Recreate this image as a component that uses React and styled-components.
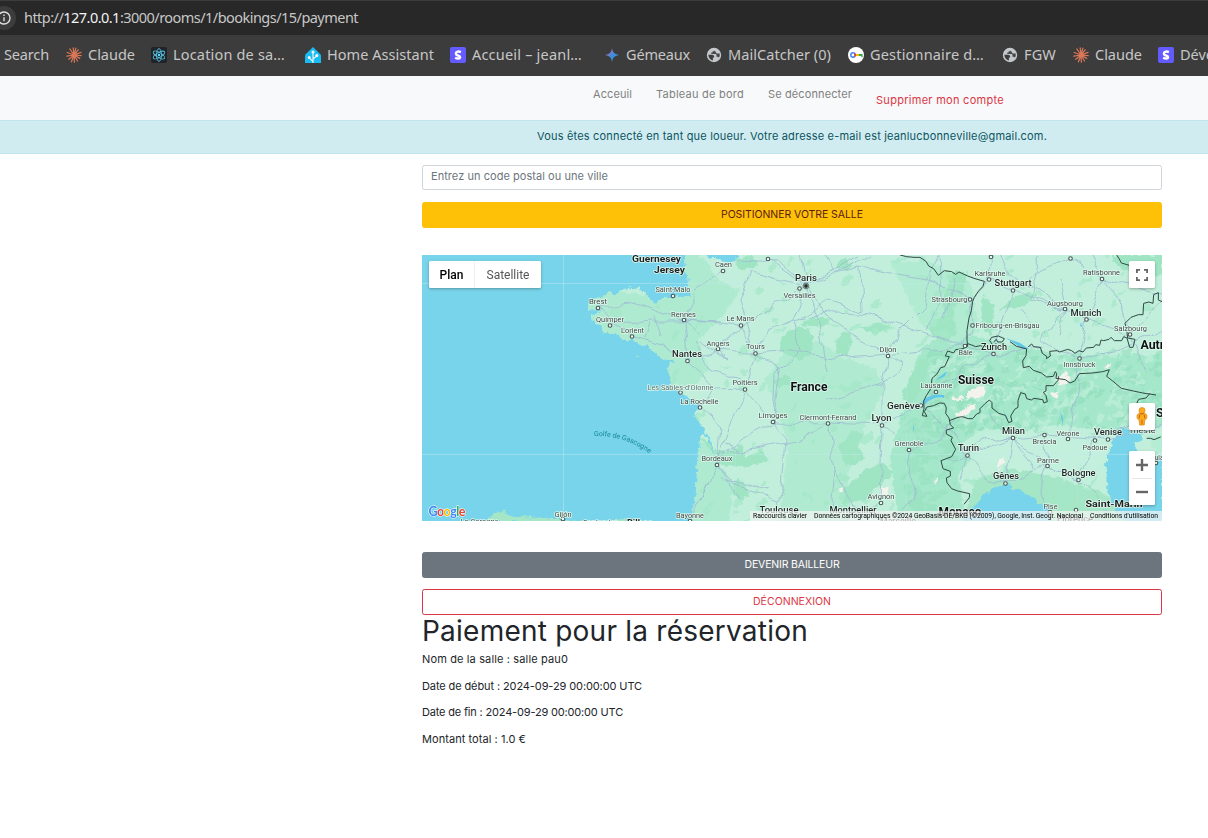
import React, { useLayoutEffect, useRef, useState } from 'react';
import styled, { createGlobalStyle, css } from 'styled-components';

const Global = createGlobalStyle`
  * { box-sizing: border-box; }
  body { margin: 0; background: #fff; overflow: hidden; }
  #root { width: 1208px; height: 838px; }
`;

const Page = styled.div`
  display: flex;
  flex-direction: column;
  height: 838px;
  overflow: hidden;
  font-family: Inter, 'Liberation Sans', sans-serif;
  font-size: 11px;
  color: #212529;
`;

const FitSpan = styled.span`
  display: inline-block;
  white-space: pre;
`;

/* Spreads the letters so that the text takes the given width. */
function Fit({ width, children }) {
  const ref = useRef(null);
  const [spacing, setSpacing] = useState(0);
  useLayoutEffect(() => {
    const el = ref.current;
    setSpacing((width - el.getBoundingClientRect().width) / el.textContent.length);
  }, [width]);
  return <FitSpan ref={ref} style={{ letterSpacing: spacing }}>{children}</FitSpan>;
}

const AddressBar = styled.div`
  display: flex;
  align-items: center;
  flex: none;
  height: 35px;
  border-top: 1px solid #3c3c3c;
  background: #282828;
  color: #c7c7c7;
  font: 14.5px/20px 'Noto Sans', sans-serif;
  > span { margin-bottom: 2px; }
`;
const InfoBadge = styled.div`
  display: flex;
  align-items: center;
  justify-content: center;
  width: 24px;
  height: 24px;
  margin-left: -8px;
  margin-right: 8px;
  border-radius: 50%;
  background: #3c3c3c;
`;
const Host = styled.span`
  color: #f2f2f2;
`;
const Bookmarks = styled.div`
  display: flex;
  align-items: center;
  flex: none;
  height: 41px;
  padding-bottom: 1px;
  background: #3c3c3c;
  color: #c7c7c7;
  font: 14.5px/20px 'Noto Sans', sans-serif;
`;
const Bookmark = styled.div`
  display: flex;
  align-items: center;
  flex: none;
  gap: 6px;
  width: ${p => p.$w}px;
  padding-left: ${p => p.$pad || 0}px;
  white-space: nowrap;
  svg { flex: none; }
  span { margin-bottom: 2px; }
`;

const Navbar = styled.nav`
  display: flex;
  align-items: flex-start;
  flex: none;
  gap: 24px;
  height: 44px;
  padding: 10px 0 0 593px;
  background: #f8f9fa;
`;
const NavLink = styled.a`
  line-height: 16px;
  color: ${p => (p.$danger ? '#dc3545' : '#7f7f80')};
  margin-top: ${p => (p.$danger ? 6 : 0)}px;
`;
const Alert = styled.div`
  flex: none;
  height: 34px;
  padding: 7px 0 0 537px;
  border: solid #bee5eb;
  border-width: 1px 0;
  background: #d1ecf1;
  color: #0c5460;
  line-height: 16px;
`;
const Content = styled.main`
  display: flex;
  flex-direction: column;
  width: 740px;
  margin: 11px 0 0 422px;
`;
const Field = styled.div`
  height: 25px;
  padding: 2px 8px;
  border: 1px solid #ced4da;
  border-radius: 2.5px;
  color: #6c757d;
  line-height: 16px;
`;
const tones = {
  warning: css`background: #ffc107; color: #5b1a12; border-color: #ffc107;`,
  secondary: css`background: #6c757d; color: #fff; border-color: #6c757d;`,
  outline: css`background: #fff; color: #dc3545; border-color: #dc3545;`,
};
const Button = styled.button`
  display: block;
  height: 26px;
  margin: ${p => p.$top}px 0 0;
  padding: 0 0 1px;
  border: 1px solid;
  border-radius: 2.5px;
  font: 10.5px/16px Inter, sans-serif;
  ${p => tones[p.$tone]}
`;
const Title = styled.h1`
  margin: 0 0 4px;
  font-size: 28px;
  font-weight: 400;
  line-height: 32px;
`;
const Detail = styled.p`
  margin: 0 0 10.6px;
  line-height: 16px;
`;

const MapBox = styled.section`
  position: relative;
  height: 266px;
  margin: 27px 0 31px;
  overflow: hidden;
  background: #78d4ea;
  > svg { display: block; }
`;
const MapControl = styled.div`
  position: absolute;
  top: ${p => p.$top}px;
  left: ${p => p.$left}px;
  display: flex;
  flex-direction: ${p => (p.$column ? 'column' : 'row')};
  align-items: center;
  justify-content: center;
  width: ${p => p.$w || 26}px;
  height: ${p => p.$h || 27}px;
  border-radius: 1.5px;
  background: #fff;
  box-shadow: 0 1px 3px rgba(0, 0, 0, 0.3);
`;
const MapType = styled.div`
  display: flex;
  align-items: center;
  justify-content: center;
  width: ${p => p.$w}px;
  height: 100%;
  border-left: ${p => (p.$active ? 0 : 1)}px solid #eee;
  font: ${p => (p.$active ? 500 : 400)} 12px Roboto, sans-serif;
  color: ${p => (p.$active ? '#000' : '#565656')};
`;
const ZoomHalf = styled.div`
  display: flex;
  align-items: center;
  justify-content: center;
  width: 20px;
  height: 27px;
  & + & { border-top: 1px solid #e6e6e6; }
`;
const Attribution = styled.div`
  position: absolute;
  right: 0;
  bottom: 0;
  display: flex;
  gap: 7px;
  height: 10px;
  padding: 0 4px 0 3px;
  background: rgba(245, 245, 245, 0.7);
  color: #000;
  font: 6.8px/10px Roboto, sans-serif;
`;

const Claude = () => (
  <svg width="16" height="16" viewBox="0 0 16 16" stroke="#d97757" strokeWidth="1.25" strokeLinecap="round">
    <path d="M8 8 7.2.8M8 8l1.9-6.8M8 8l4.2-5.2M8 8l7-2.7M8 8l7.2.6M8 8l5.7 3.4M8 8l3.5 6M8 8l.4 7.2M8 8l-2.6 6.8M8 8l-5.2 4.3M8 8 .8 9.1M8 8 1.2 5.5M8 8 3.8 1.9" />
  </svg>
);
const ReactLogo = () => (
  <svg width="16" height="16" viewBox="0 0 16 16">
    <rect width="16" height="16" rx="2" fill="#20232a" />
    <g fill="none" stroke="#53c1de" strokeWidth=".9">
      {[30, 90, 150].map(a => <ellipse key={a} cx="8" cy="8" rx="6.4" ry="2.5" transform={`rotate(${a} 8 8)`} />)}
    </g>
    <circle cx="8" cy="8" r="1.2" fill="#61dafb" />
  </svg>
);
const HomeLogo = () => (
  <svg width="16" height="16" viewBox="0 0 16 16">
    <path d="M8 0l7.6 7.5q.4.5.4 1.2V16H0V8.7q0-.7.4-1.2z" fill="#18bcf2" />
    <g stroke="#f2f4f9" strokeWidth="1.1" fill="#f2f4f9">
      <path d="M8 16V5M8 14.5 4.2 10.8M8 12l3.7-3.2" />
      <circle cx="8" cy="5" r="1" /><circle cx="4.2" cy="10.5" r="1" /><circle cx="11.8" cy="8.6" r="1" />
    </g>
  </svg>
);
const Stripe = () => (
  <svg width="16" height="16" viewBox="0 0 16 16">
    <rect width="16" height="16" rx="2" fill="#635bff" />
    <path d="M10.9 4.3C8.7 3.3 5.9 3.6 5.9 5.7c0 2.6 4.2 1.8 4.2 3.7 0 1.8-2.8 1.6-5 .5" fill="none" stroke="#fff" strokeWidth="2.4" transform="translate(0 .8)" />
  </svg>
);
const Gemini = () => (
  <svg width="16" height="16" viewBox="0 0 16 16">
    <defs><linearGradient id="gem" x1="0" y1="0" x2="1" y2="1"><stop offset=".2" stopColor="#9a72c2" /><stop offset=".6" stopColor="#318fdd" /><stop offset="1" stopColor="#51b9dc" /></linearGradient></defs>
    <path d="M8 1.3Q8.7 7.3 15 8 8.7 8.7 8 14.7 7.3 8.7 1 8 7.3 7.3 8 1.3z" fill="url(#gem)" />
  </svg>
);
const Globe = () => (
  <svg width="16" height="16" viewBox="0 0 16 16">
    <circle cx="8" cy="8" r="7.2" fill="#c4c7cc" />
    <path d="M2.3 7.8h3.9q1.9.1 2 2v.8H6.9v2.9Q2.8 12.4 2.3 7.8z" fill="#3c3c3c" />
    <path d="M9 2.4v.8q-.1 1-1.2 1.1H6.6v1.3H5.3v1.4h4.1q1 .1 1.1 1.1v1.6h1q1 0 1.3 1 1.4-1.7.9-4.2H11q-1-.1-1-1.1V4.8h-.9z" fill="#3c3c3c" opacity=".92" />
  </svg>
);
const KeyLogo = () => (
  <svg width="16" height="16" viewBox="0 0 16 16">
    <circle cx="8" cy="8" r="8" fill="#fff" />
    <path d="M7.4 7h5v2h-5z" fill="#fbbc04" />
    <path d="M11 7h3.6v3.2h-1.3V9H11z" fill="#34a853" />
    <circle cx="5" cy="8" r="2.2" fill="none" stroke="#4285f4" strokeWidth="1.5" />
    <path d="M6.2 6.3Q7.2 6.9 7.2 8T6.2 9.7" fill="none" stroke="#ea4335" strokeWidth="1.5" />
  </svg>
);

const bookmarks = [
  { text: 'Search', tw: 45, w: 66, pad: 4 },
  { icon: Claude, text: 'Claude', tw: 47, w: 85 },
  { icon: ReactLogo, text: 'Location de sa…', tw: 112, w: 154 },
  { icon: HomeLogo, text: 'Home Assistant', tw: 107, w: 145 },
  { icon: Stripe, text: 'Accueil – jeanl…', tw: 110, w: 154 },
  { icon: Gemini, text: 'Gémeaux', tw: 64, w: 102 },
  { icon: Globe, text: 'MailCatcher (0)', tw: 103, w: 142 },
  { icon: KeyLogo, text: 'Gestionnaire d…', tw: 114, w: 154 },
  { icon: Globe, text: 'FGW', tw: 32, w: 71 },
  { icon: Claude, text: 'Claude', tw: 47, w: 85 },
  { icon: Stripe, text: 'Développeurs', tw: 94, w: 120 },
];

/* [name, centre x, centre y, width, size class] */
const labels = [
  ['Guernesey', 656.5, 259, 49, 'm'], ['Jersey', 669.5, 269.7, 31, 'm'],
  ['Caen', 723.5, 264.6, 17], ['Saint-Malo', 673, 289.2, 35], ['Brest', 598, 301.2, 18],
  ['Quimper', 610, 319.4, 28], ['Lorient', 632.5, 330.8, 23], ['Rennes', 683.5, 314, 25],
  ['Le Mans', 740.5, 318.8, 28], ['Angers', 718, 343.6, 23], ['Tours', 755.5, 346.8, 19],
  ['Nantes', 687, 353.8, 30, 'c'], ["Les Sables-d'Olonne", 680.5, 387, 66, 's'],
  ['Poitiers', 745, 382.8, 25], ['La Rochelle', 699.5, 401.4, 38], ['Limoges', 773, 415.6, 29],
  ['Bordeaux', 717, 458.4, 31], ['Gijón', 563, 514, 17], ['La Corogne', 479.5, 521, 38],
  ['Santander', 600, 522, 34], ['Bilbao', 640, 523, 26, 'm'],
  ['Bayonne', 690, 515.4, 28], ['Toulouse', 779, 510, 39, 'c'], ['Paris', 806, 278.2, 22, 'c'],
  ['Versailles', 799.5, 295.4, 32], ['Dijon', 888, 349.4, 17], ['France', 809, 387.2, 37, 'l'],
  ['Clermont-Ferrand', 828, 417.6, 57], ['Lyon', 881.5, 418, 20, 'c'], ['Genève', 903.5, 406, 33, 'c'],
  ['Lausanne', 936.5, 385.6, 32], ['Grenoble', 909, 443.6, 29], ['Avignon', 881, 496.4, 27],
  ['Montpellier', 853, 510, 47, 'c'], ['Monaco', 960, 511.5, 43, 'l'], ['Marseille', 898, 521, 36, 'c'],
  ['Strasbourg', 949.5, 299.4, 36], ['Karlsruhe', 990, 273.4, 31], ['Stuttgart', 1013, 283, 37, 'c'],
  ['Fribourg-en-Brisgau', 1007.5, 325.4, 64], ['Bâle', 965.5, 352.3, 14], ['Zurich', 994, 346.4, 26, 'c'],
  ['Suisse', 976, 380, 36, 'l'], ['Milan', 1013.5, 430.7, 23, 'c'], ['Brescia', 1044.5, 441.2, 24],
  ['Turin', 968.5, 448, 21, 'c'], ['Parme', 1048, 460.6, 22], ['Gênes', 1006, 476, 26, 'c'],
  ['Pise', 1050.5, 506.4, 14], ['Ratisbonne', 1101.5, 272.8, 37], ['Augsbourg', 1065, 303, 36],
  ['Munich', 1086, 312.4, 31, 'c'], ['Salzbourg', 1130.5, 328.4, 33], ['Innsbruck', 1079.5, 364.8, 32],
  ['Autriche', 1164, 344.5, 47, 'l'], ['Slovénie', 1180, 413, 48, 'l'], ['Vérone', 1068, 433.3, 23],
  ['Venise', 1108, 432, 28, 'c'], ['Padoue', 1095, 447.3, 25], ['Trieste', 1142, 430.6, 27],
  ['Bologne', 1078.5, 472.8, 34, 'c'], ['Saint-Marin', 1114, 503.3, 57, 'm'],
  ['Florence', 1075, 519, 36, 'c'], ['Pula', 1157, 457.5, 13],
];
const classes = {
  n: { size: 7.4, weight: 400, fill: '#3d4a46' },
  s: { size: 7.2, weight: 400, fill: '#5a746e' },
  c: { size: 9.2, weight: 500, fill: '#1d2523' },
  m: { size: 9.8, weight: 700, fill: '#1c2322' },
  l: { size: 11.9, weight: 700, fill: '#0c1211' },
};

const dots = [
  [723, 271], [673, 296], [598, 308], [610, 325.5], [632, 336.5], [684, 320], [741, 325.5], [718, 349],
  [755.5, 353.5], [687.5, 361], [680.5, 392.5], [745, 389.5], [700, 407.5], [773, 422], [717, 465],
  [768, 259], [799.5, 288.5], [888, 356], [828, 423.5], [882, 425.5], [921, 405.5], [936, 392],
  [909, 450], [881, 503], [989, 279.5], [1013, 290.5], [970, 299.5], [972.5, 325.5], [993.5, 354],
  [965, 346], [1013, 438], [1044.5, 435], [967.5, 455.5], [1047.5, 466], [1005.5, 483.5], [1102, 279],
  [1065, 309], [1086.5, 319.5], [1130, 334.5], [1079.5, 358.5], [1068, 439], [1108, 439.5],
  [1095, 440.5], [1078.5, 480], [1050, 512], [1076, 510], [563, 519], [690, 521], [1070.5, 258.5], [991, 257], [1156, 463],
];

/* Motorways and main roads. */
const roads = [
  'M598 308 636 303 684 320 741 325 780 303 806 286', 'M598 308 610 325 632 336 662 345 687 360', 'M610 325 650 320 684 320 695 290 723 271',
  'M684 320 687 360 718 349 741 325', 'M687 360 716 390 745 389 755 353 741 325', 'M700 407 716 390M700 407 720 425 717 465 690 521',
  'M745 389 728 428 717 465 735 485 779 500 785 521', 'M755 353 790 350 833 358 888 354', 'M755 353 780 370 773 422 785 440 780 500',
  'M745 389 773 422 828 423 882 425', 'M806 286 768 259M806 286 750 272 740 300 755 353', 'M806 286 792 320 800 350 775 375 773 422',
  'M806 286 830 318 860 340 888 356 882 390 882 425 880 503 860 521', 'M806 286 835 272 870 255M835 272 860 266 925 278 970 299',
  'M806 286 818 320 827 372', 'M792 322 835 312 870 315 900 325 945 340 965 346', 'M828 423 835 470 832 500 840 521',
  'M717 455 760 448 800 440 828 423', 'M888 356 900 330 925 305 930 270', 'M888 356 935 350 965 346', 'M882 425 921 405 936 392 965 365 994 354',
  'M882 425 909 450 915 500 895 521', 'M827 400 880 385 905 365 888 356', 'M860 266 862 312', 'M970 299 972 325 965 346 1000 355 1040 345',
  'M970 299 989 279 1013 290 1065 309 1086 319 1130 334', 'M989 279 991 255M1013 290 1000 330 994 354', 'M1013 290 1040 270 1070 258 1102 279 1162 292',
  'M1086 319 1102 279M1086 319 1080 358 1075 400 1068 439', 'M1065 309 1040 340 1080 358 1120 350 1162 330', 'M921 405 950 430 967 455 1013 438 1044 435 1108 439 1162 425',
  'M967 455 985 478 1005 483 1047 466 1078 480 1095 440', 'M1013 438 1047 466 1078 480 1120 521', 'M1013 438 1005 483M967 455 960 480', 'M1047 466 1040 490 1050 521',
  'M700 340 730 360 718 349 755 353', 'M700 335 684 320 720 322', 'M740 500 717 465M925 278 940 255', 'M1162 300 1130 334 1145 372', 'M770 490 720 478', 'M1040 255 1030 300 1065 309', 'M908 450 940 440 955 420', 'M773 422 740 440 717 465', 'M650 322 645 338',
  'M806 286 800 255M835 272 825 255M806 286 845 262 860 255M806 286 780 262 740 260', 'M800 320 830 300 862 312M755 353 770 330 792 320', 'M940 255 942 300 925 330M955 280 945 320', 'M1000 255 1010 275 1040 290 1065 309M1090 255 1102 279 1120 300 1130 334', 'M1060 280 1065 309 1060 335M1020 310 1035 330',
  'M1013 438 1000 425 990 410M1013 438 1025 455 1035 470M1044 435 1047 466M1095 440 1130 425', 'M967 455 950 460M967 455 980 440 1013 438', 'M700 500 710 480M725 445 740 450', 'M860 521 850 500 835 470', 'M660 335 655 315M695 340 710 370 740 380',
];

/* Country borders, at three times the map's scale. */
const borders = [
  'M360 15l20 5 22 2 18 0 18 12 8 14 15 8 14 20 18-14 22 3 12 8 10-7 26 12 22 8 28 8-4 15-14 15-12 18-5 12-4 28-7 22-6 38 0 28 2 19-14 7-22 3-6 10-18-6-7 15 12 2-14 30-12 3-12 20-14 12-3 30-14 22-8 16 1 24-5 20 14 2-8-14 8-14 20-4 18-8 14 1 6 14-2 16 10 14 4 20 10 10-22 6 0 12 18 10-4 10 14 26-12 22-32 12 6 24 22 8 0 14-12 6 2 14 14 18 18 7 36 8-1 12-16 20',
  'M555 289l8-8 12 4 12 5 14-3 10 3 28-4-10-14 6-10 20-4 18 8-6 10-14 0-4-8-8 8M690 275l20 14 30 8',
  'M508 512l26-10 14-2 16 6 14 0 12-14 10-4 0-12 14-14 14-12 8 8 0 16 20 16 20 6 10 22 10-4-4-16 12-20 10-6 0-20 8-24 14 4 4 14 14 4 8-5 26 4 4 10 10-4-4-18-8-10 8-4 0-16 22 0 14-16 2-12',
  'M740 297l-2 20-10 16 2 20 18-4 12 12 24 8 16 12 20-2 6-14 4 6-2 14 28 4 14 10 14-6 14-22 40-2 30-4 20-6-8 20 18 14 26 22 36 8 28 6 40 6',
  'M745 290l10-8 6 8 20 2 6 18 14 10-2 6 12-8-2-14 22-2 8 4 24-8 12 4 10 8 12-8 12 4 10-12 22-2 6-8 12 2 4-16 8 2 16-4 6-6 10 10 22 0 6-12 10 4 8 28 10 0 6-24-22-4-2-16-6-28 18-18 22-8 14 0 2-34 16-4 12 4 2-26 14-6 0 22 22 10',
  'M1010 15l8 12 6 12 14 4 12 4M1110 430l-12 14-22 4-10 20M1100 565l12 0 10 4 20-8',
];

/* Forests and hills with a darker tint. */
const forests = [
  'M780 340q12-16 26-12l8 8-2 14-10 12-22-12z', 'M700 437l8 12 22 2 12-6 4 12 16-8 8 12-28 6-24-4-8-20z', 'M735 480l8 1 6 12-6 8-12-8z',
  'M838 445l16-14 10 2-6 14 8 12-20 8z', 'M845 488l20-18 20-8 8 12-30 26-20 4z', 'M928 330l14-14 12-6 2 24-14 10z', 'M918 360l12-4-6 30-16 20-6-10z', 'M952 272l16 0-6 24-14 22-6-12z',
  'M735 260l18-5 6 10-20 6z', 'M860 328l22-6 10 6-18 6z', 'M983 296l12 10-4 32-10-12z', 'M800 325l12-8 20 2-8 8z', 'M772 380l16-4 4 8-14 4z', 'M835 340l10-8 8 6-6 18-10-4z',
  'M838 260l10 0 4 8-14 2z', 'M1000 310l14-14 24-4-12 14z', 'M1112 262l30 20 20-8v-19h-50z',
];

function random(seed) {
  let s = seed;
  return () => {
    s = (s * 16807) % 2147483647;
    return s / 2147483647;
  };
}
function patches(seed, count, x0, y0, w, h, size) {
  const r = random(seed);
  return Array.from({ length: count }, () => {
    const x = x0 + r() * w, y = y0 + r() * h, a = 1.5 + r() * size, b = 1 + r() * size * 0.45;
    return { cx: x, cy: y, rx: a, ry: b, transform: `rotate(${-70 + r() * 80} ${x} ${y})` };
  });
}
const hills = patches(77, 210, 600, 255, 562, 266, 7);
const alpsLight = patches(1234, 190, 930, 350, 232, 85, 5);
const alpsDark = patches(4321, 190, 930, 350, 232, 85, 5);
const provence = patches(99, 130, 905, 415, 50, 100, 5);

const MAINLAND = 'M685 245L686 270 688 282 690 297 680 298 662 298 655 303 648 297 640 288 630 287 618 293 605 294 590 301 589 310 605 311 592 314 593 322 600 325 602 334 612 334 620 336 630 341 635 340 642 347 648 345 652 350 660 357 668 360 677 362 669 364 667 369 672 381 680 394 695 401 700 406 696 414 698 421 705 430 700 440 698 462 696 488 690 531 1180 531V245H742L737 260 728 263 718 259 708 257 702 245z';
const SEAS = [
  'M963 531l0-17 14-10 8-10 12-8 10-2 12 7 13 6 12 9 4 8 4 9 2 8z',
  'M1162 455v76h-32l-8-12-10-16-6-14 1-18-1-10 5-16 4-11 8-6 14 2 5 8-8 6 4 8 6 9z',
];

function MapDrawing() {
  return (
    <svg width="740" height="266" viewBox="422 255 740 266">
      <defs>
        <filter id="rough" filterUnits="userSpaceOnUse" x="412" y="240" width="770" height="296" colorInterpolationFilters="sRGB">
          <feTurbulence type="fractalNoise" baseFrequency=".16" numOctaves="3" seed="4" />
          <feDisplacementMap in="SourceGraphic" scale="7" xChannelSelector="R" yChannelSelector="G" />
        </filter>
        <filter id="wavy" filterUnits="userSpaceOnUse" x="412" y="240" width="770" height="296" colorInterpolationFilters="sRGB">
          <feTurbulence type="fractalNoise" baseFrequency=".06" numOctaves="1" seed="8" />
          <feDisplacementMap in="SourceGraphic" scale="13" xChannelSelector="R" yChannelSelector="G" />
        </filter>
        <clipPath id="land"><path d={MAINLAND} /></clipPath>
        <path id="gulf" d="M594 436q31-1 56 18" />
      </defs>
      <rect x="422" y="255" width="740" height="266" fill="#78d4ea" />
      <g filter="url(#rough)">
        <path d={MAINLAND} fill="#c1efdb" />
        <path d="M486 522l8-9 12-1 12 5 26 1 20 2 32 2zM612 522l12-4 12 4z" fill="#a4e6c6" />
        <path d="M635 356l6-1v3zM693 415l6 2 1 6z" fill="#a4e6c6" />
        <g clipPath="url(#land)">
          <path d="M585 290l90 6 12-51 18 15 15 22 20 8-14 22-28 28 10 30-16 20-40-20-70-50z" fill="#aeead0" />
          <path d="M765 380l22-30 30-10 28 18 30 10 10 22-20 36-18 50 6 55h-75l10-91z" fill="#b0ebd1" />
          <path d="M698 440l14 8 8 20 14 14-6 49h-45z" fill="#aeead0" />
          <path d="M920 350l30-20 40 10 70 15 120 0v70l-66 5-60-5-64 10-32 40 10 56-70-14-8-60z" fill="#a5e7ca" />
          <path d="M890 262l40 0 40 20 10 50-30 14-30-24z" fill="#b1ebd2" />
          <path d="M975 480l30-12 50 8 50 18 40 37H960z" fill="#a4e6c6" />
          <g fill="#9fe5c4">{forests.map(d => <path key={d} d={d} />)}</g>
          <g fill="#a4e7c8" opacity=".75">{hills.map((e, i) => <ellipse key={i} {...e} />)}</g>
          <g fill="#bfeedb" opacity=".7">{alpsLight.map((e, i) => <ellipse key={i} {...e} />)}</g>
          <g fill="#88d9b6" opacity=".45">{alpsDark.map((e, i) => <ellipse key={i} {...e} />)}</g>
          <g fill="#93dfbe" opacity=".5">{provence.map((e, i) => <ellipse key={i} {...e} />)}</g>
          <path d="M985 428l80 6 45 8-4 26-51 10-50-12-35-8-12-12z" fill="#c3f0dd" opacity=".85" />
          <g fill="#f3f2ec">
            <path d="M968 392l18-8-3 11-15 4zM953 398l10-3 1 4-12 3zM955 414l20-12 2 6-14 10zM1056 378l10-6 5 8-12 6zM1050 393l8-2-2 8zM1104 366l7-3-1 7zM838 490l8-4-3 6zM880 488l10-1-3 10-8 2zM934 480l5-2-2 5zM998 460l5-4 1 8-6 5z" />
          </g>
        </g>
        <g fill="#78d4ea">{SEAS.map(d => <path key={d} d={d} />)}</g>
        <path d="M1147 437l15-3v20l-7-6-4-5z" fill="#b5ecd4" />
        <path d="M700 430l9 8 4 15" fill="none" stroke="#78d4ea" strokeWidth="2.2" />
      </g>
      <g fill="#5fc8ea">
        <path d="M922 402q7-9 22-7v3q-10-3-20 7zM937 379l10-8-2 5-8 4zM1006 338l14 5 9 6-6 0zM1060 411l3 7 0 8zM1003 410l4 7 1 4zM913 424l1 5-1 3zM1081 322l1 5-2-1z" />
      </g>
      <g stroke="#c3e9ee" strokeOpacity=".45" strokeWidth="1">
        <path d="M422 283.5h740M422 454.5h740M563.5 255v266" />
        <path d="M735.5 255v266M906.5 255v266M1077.5 255v266" strokeOpacity=".2" />
      </g>
      <g filter="url(#wavy)" fill="none" stroke="#9fbcd4" strokeWidth="1" strokeOpacity=".85">
        {roads.map(d => <path key={d} d={d} />)}
      </g>
      <g transform="translate(780 250) scale(.33333)" fill="none" stroke="#2f4843" strokeWidth="3" strokeLinejoin="round">
        {borders.map(d => <path key={d} d={d} />)}
      </g>
      <g fill="#e8f8f2" stroke="#4a5855" strokeWidth="1.1">
        {dots.map(([x, y]) => <circle key={x + '-' + y} cx={x} cy={y} r="1.8" />)}
        <circle cx="806" cy="286" r="2.8" strokeWidth=".8" />
        <circle cx="806" cy="286" r="1.6" fill="#222" />
      </g>
      <g fontFamily="Roboto, sans-serif" textAnchor="middle" stroke="#e2f7ef" strokeWidth="1.5" strokeLinejoin="round" paintOrder="stroke">
        {labels.map(([name, x, y, w, kind]) => {
          const c = classes[kind || 'n'];
          return (
            <text key={name} x={x} y={y + c.size * 0.355} fontSize={c.size} fontWeight={c.weight} fill={c.fill} textLength={w} lengthAdjust="spacingAndGlyphs">{name}</text>
          );
        })}
      </g>
      <text fontFamily="Roboto, sans-serif" fontSize="7" fill="#16889c"><textPath href="#gulf" textLength="59">Golfe de Gascogne</textPath></text>
      <text x="428.5" y="516" fontFamily="Lato, sans-serif" fontSize="12.5" fontWeight="700" textLength="37" stroke="#fff" strokeWidth="1" paintOrder="stroke">
        <tspan fill="#4285f4">G</tspan><tspan fill="#ea4335">o</tspan><tspan fill="#fbbc04">o</tspan><tspan fill="#4285f4">g</tspan><tspan fill="#34a853">l</tspan><tspan fill="#ea4335">e</tspan>
      </text>
    </svg>
  );
}

export default function App() {
  return (
    <Page>
      <Global />
      <AddressBar>
        <InfoBadge>
          <svg width="14" height="14" viewBox="0 0 14 14" fill="none" stroke="#dedede" strokeWidth="1.4">
            <circle cx="7" cy="7" r="6" /><path d="M7 6.2v4M7 3.6v1.5" />
          </svg>
        </InfoBadge>
        <Fit width={334}>http://<Host>127.0.0.1</Host>:3000/rooms/1/bookings/15/payment</Fit>
      </AddressBar>
      <Bookmarks>
        {bookmarks.map(({ icon: Icon, text, tw, w, pad }, i) => (
          <Bookmark key={i} $w={w} $pad={pad}>
            {Icon && <Icon />}
            <Fit width={tw}>{text}</Fit>
          </Bookmark>
        ))}
      </Bookmarks>
      <Navbar>
        <NavLink><Fit width={39}>Acceuil</Fit></NavLink>
        <NavLink><Fit width={88}>Tableau de bord</Fit></NavLink>
        <NavLink><Fit width={84}>Se déconnecter</Fit></NavLink>
        <NavLink $danger><Fit width={128}>Supprimer mon compte</Fit></NavLink>
      </Navbar>
      <Alert><Fit width={510}>Vous êtes connecté en tant que loueur. Votre adresse e-mail est jeanlucbonneville@gmail.com.</Fit></Alert>
      <Content>
        <Field><Fit width={177}>Entrez un code postal ou une ville</Fit></Field>
        <Button $tone="warning" $top={12}><Fit width={142}>POSITIONNER VOTRE SALLE</Fit></Button>
        <MapBox>
          <MapDrawing />
          <MapControl $top={6} $left={7} $w={112}>
            <MapType $w={45} $active>Plan</MapType>
            <MapType $w={67}>Satellite</MapType>
          </MapControl>
          <MapControl $top={6} $left={707}>
            <svg width="12" height="12" viewBox="0 0 12 12" fill="none" stroke="#666" strokeWidth="1.8">
              <path d="M.9 4V.9H4M8 .9h3.1V4M11.1 8v3.1H8M4 11.1H.9V8" />
            </svg>
          </MapControl>
          <MapControl $top={148} $left={707}>
            <svg width="12" height="21" viewBox="0 0 13 21">
              <path d="M3.2 7.2Q1 8 1 10l.4 3 1.8.8.7 6h5l.8-6 1.8-.8.4-3q0-2-2.2-2.8z" fill="#fbab1b" stroke="#d98312" strokeWidth=".7" />
              <circle cx="6.5" cy="4" r="3.3" fill="#fbab1b" stroke="#d98312" strokeWidth=".7" />
              <path d="M6.5 14v5M4 8.5l-.5 4M9 8.5l.5 4M4.5 7.6h4" stroke="#b9541b" strokeWidth=".9" />
            </svg>
          </MapControl>
          <MapControl $top={196} $left={707} $h={54} $column>
            <ZoomHalf><svg width="12" height="12" viewBox="0 0 12 12" stroke="#666" strokeWidth="2.4"><path d="M0 6h12M6 0v12" /></svg></ZoomHalf>
            <ZoomHalf><svg width="12" height="12" viewBox="0 0 12 12" stroke="#666" strokeWidth="2.4"><path d="M0 6h12" /></svg></ZoomHalf>
          </MapControl>
          <Attribution>
            <Fit width={54}>Raccourcis clavier</Fit>
            <Fit width={269}>Données cartographiques ©2024 GeoBasis-DE/BKG (©2009), Google, Inst. Geogr. Nacional</Fit>
            <Fit width={68}>Conditions d'utilisation</Fit>
          </Attribution>
        </MapBox>
        <Button $tone="secondary" $top={0}><Fit width={95}>DEVENIR BAILLEUR</Fit></Button>
        <Button $tone="outline" $top={11}><Fit width={78}>DÉCONNEXION</Fit></Button>
        <Title><Fit width={386}>Paiement pour la réservation</Fit></Title>
        <Detail><Fit width={146}>Nom de la salle : salle pau0</Fit></Detail>
        <Detail><Fit width={220}>Date de début : 2024-09-29 00:00:00 UTC</Fit></Detail>
        <Detail><Fit width={201}>Date de fin : 2024-09-29 00:00:00 UTC</Fit></Detail>
        <Detail><Fit width={104}>Montant total : 1.0 €</Fit></Detail>
      </Content>
    </Page>
  );
}
